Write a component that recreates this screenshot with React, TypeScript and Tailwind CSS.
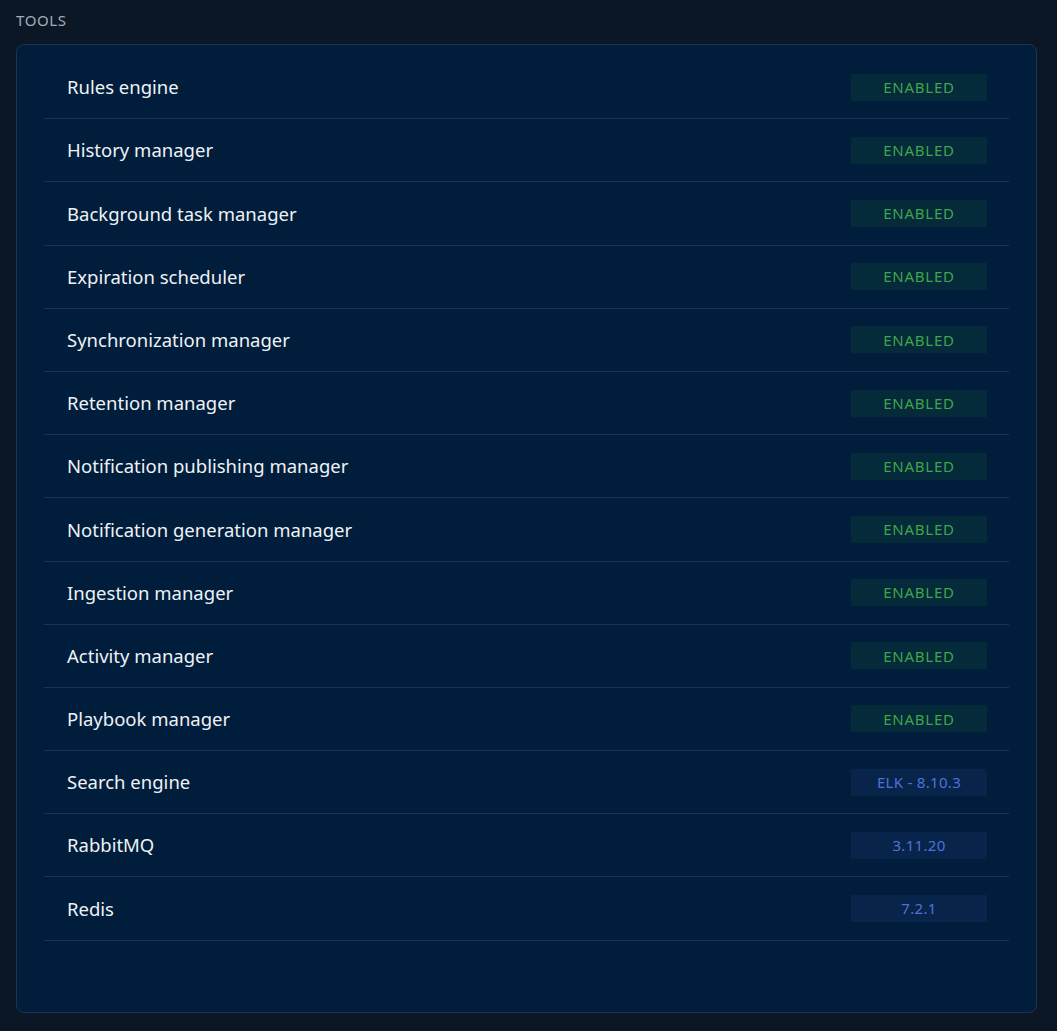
import React from "react";

type Tool = { name: string; value: string; kind: "status" | "version" };

const tools: Tool[] = [
  { name: "Rules engine", value: "ENABLED", kind: "status" },
  { name: "History manager", value: "ENABLED", kind: "status" },
  { name: "Background task manager", value: "ENABLED", kind: "status" },
  { name: "Expiration scheduler", value: "ENABLED", kind: "status" },
  { name: "Synchronization manager", value: "ENABLED", kind: "status" },
  { name: "Retention manager", value: "ENABLED", kind: "status" },
  { name: "Notification publishing manager", value: "ENABLED", kind: "status" },
  { name: "Notification generation manager", value: "ENABLED", kind: "status" },
  { name: "Ingestion manager", value: "ENABLED", kind: "status" },
  { name: "Activity manager", value: "ENABLED", kind: "status" },
  { name: "Playbook manager", value: "ENABLED", kind: "status" },
  { name: "Search engine", value: "ELK - 8.10.3", kind: "version" },
  { name: "RabbitMQ", value: "3.11.20", kind: "version" },
  { name: "Redis", value: "7.2.1", kind: "version" },
];

const ToolRow = ({ tool }: { tool: Tool }) => {
  const badge =
    tool.kind === "status"
      ? "bg-[#052a3a] text-[#3da54c] tracking-[0.05em]"
      : "bg-[#08244a] text-[#4d72d9] tracking-[0.02em]";
  return (
    <div className="flex h-[63.2px] items-center justify-between border-b border-[#1a3352] pl-[23px] pr-[22px]">
      <p className="text-[18.5px] text-[#eef2f6]">{tool.name}</p>
      <span
        className={`flex h-[27px] w-[136px] items-center justify-center text-[15px] ${badge}`}
      >
        {tool.value}
      </span>
    </div>
  );
};

export default function App() {
  return (
    <div
      className="min-h-[1031px] bg-[#0c1726] pb-[18px] pl-4 pr-[20px] pt-[10px]"
      style={{ fontFamily: '"Noto Sans", "Open Sans", sans-serif' }}
    >
      <p className="mb-[13px] text-[15px] leading-[21px] tracking-[0.04em] text-[#a3acb7]">
        TOOLS
      </p>
      <div className="h-[969px] rounded-[8px] border border-[#1c3352] bg-[#001d3b] px-[27px] pt-[11px]">
        {tools.map((t) => (
          <ToolRow key={t.name} tool={t} />
        ))}
      </div>
    </div>
  );
}
